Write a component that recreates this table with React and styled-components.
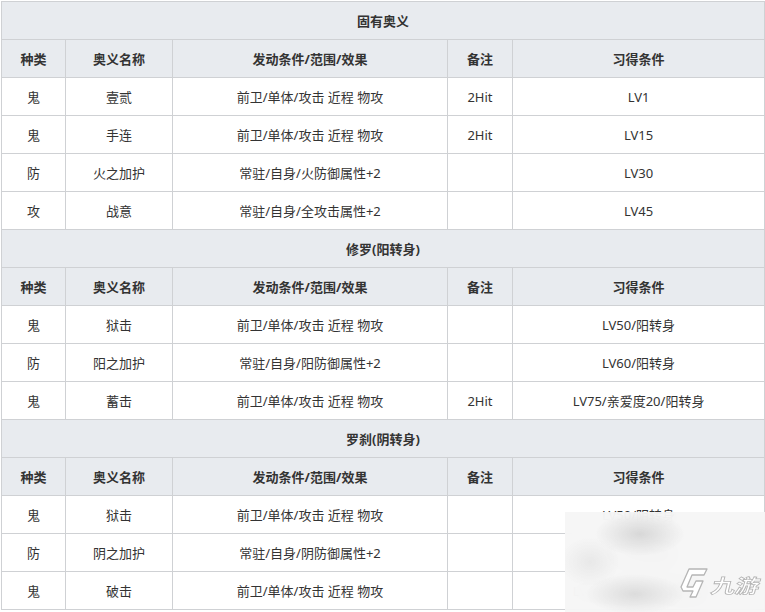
import React from 'react'
import styled, { createGlobalStyle } from 'styled-components'

const GlobalStyle = createGlobalStyle`
  html, body { margin: 0; padding: 0; background: #fff; }
  body { font-family: "Noto Sans", "Noto Sans CJK SC", sans-serif; color: #333; }
`

const Page = styled.div`
  position: relative;
  width: 765px;
  height: 612px;
  overflow: hidden;
  padding: 1px 0 0 1px;
  box-sizing: border-box;
`

const Table = styled.table`
  width: 763px;
  border-collapse: collapse;
  table-layout: fixed;
  font-size: 13px;
`

const Col = styled.col`
  width: ${(props) => props.w}px;
`

const Cell = styled.td`
  height: 37px;
  padding: 0;
  border: 1px solid #cfd1d4;
  text-align: center;
  vertical-align: middle;
  line-height: 18px;
  background: ${(props) => (props.head ? '#e8ebef' : '#fff')};
  font-weight: ${(props) => (props.head ? 700 : 400)};
  color: #333;
`

const Watermark = styled.div`
  position: absolute;
  left: 565px;
  top: 512px;
  width: 200px;
  height: 100px;
  backdrop-filter: blur(10px);
  background:
    radial-gradient(ellipse 45px 22px at 75px 22px, rgba(195,195,195,0.6), transparent),
    radial-gradient(ellipse 50px 20px at 70px 82px, rgba(200,200,200,0.55), transparent),
    radial-gradient(ellipse 30px 25px at 25px 50px, rgba(215,215,215,0.45), transparent),
    rgba(245,245,245,0.93);
  display: flex;
  align-items: flex-end;
  justify-content: flex-end;
  padding: 0 5px 13px 0;
  box-sizing: border-box;
`

const LogoMark = styled.svg`
  width: 28px;
  height: 32px;
  margin-right: 4px;
`

const LogoText = styled.span`
  font-family: "Noto Sans CJK SC", sans-serif;
  font-size: 24px;
  font-weight: 700;
  color: #fff;
  -webkit-text-stroke: 1px #b5b5b5;
  white-space: nowrap;
  transform: skewX(-14deg) scaleY(0.8);
  line-height: 26px;
  margin-bottom: 1px;
`

const sections = [
  {
    title: '固有奥义',
    rows: [
      ['鬼', '壹贰', '前卫/单体/攻击 近程 物攻', '2Hit', 'LV1'],
      ['鬼', '手连', '前卫/单体/攻击 近程 物攻', '2Hit', 'LV15'],
      ['防', '火之加护', '常驻/自身/火防御属性+2', '', 'LV30'],
      ['攻', '战意', '常驻/自身/全攻击属性+2', '', 'LV45'],
    ],
  },
  {
    title: '修罗(阳转身)',
    rows: [
      ['鬼', '狱击', '前卫/单体/攻击 近程 物攻', '', 'LV50/阳转身'],
      ['防', '阳之加护', '常驻/自身/阳防御属性+2', '', 'LV60/阳转身'],
      ['鬼', '蓄击', '前卫/单体/攻击 近程 物攻', '2Hit', 'LV75/亲爱度20/阳转身'],
    ],
  },
  {
    title: '罗刹(阴转身)',
    rows: [
      ['鬼', '狱击', '前卫/单体/攻击 近程 物攻', '', 'LV50/阴转身'],
      ['防', '阴之加护', '常驻/自身/阴防御属性+2', '', 'LV60/阴转身'],
      ['鬼', '破击', '前卫/单体/攻击 近程 物攻', '', 'LV75/亲爱度20/阴转身'],
    ],
  },
]

const headers = ['种类', '奥义名称', '发动条件/范围/效果', '备注', '习得条件']
const widths = [64, 107, 275, 65, 252]

const App = () => {
  return (
    <Page>
      <GlobalStyle />
      <Table>
        <colgroup>
          {widths.map((w, i) => (
            <Col key={i} w={w} />
          ))}
        </colgroup>
        <tbody>
          {sections.map((s) => (
            <React.Fragment key={s.title}>
              <tr>
                <Cell head colSpan={5}>{s.title}</Cell>
              </tr>
              <tr>
                {headers.map((h) => (
                  <Cell head key={h}>{h}</Cell>
                ))}
              </tr>
              {s.rows.map((r, i) => (
                <tr key={i}>
                  {r.map((c, j) => (
                    <Cell key={j}>{c}</Cell>
                  ))}
                </tr>
              ))}
            </React.Fragment>
          ))}
        </tbody>
      </Table>
      <Watermark>
        <LogoMark viewBox="0 0 28 32">
          <path
            d="M9 2 L27 2 L24 8 L12 8 L7 20 L13 20 L16 14 L23 14 L16 30 L10 30 L13 24 L3 24 L1 20 Z"
            fill="#fff"
            stroke="#b5b5b5"
            strokeWidth="1.3"
            strokeLinejoin="round"
          />
        </LogoMark>
        <LogoText>九游</LogoText>
      </Watermark>
    </Page>
  )
}

export default App
